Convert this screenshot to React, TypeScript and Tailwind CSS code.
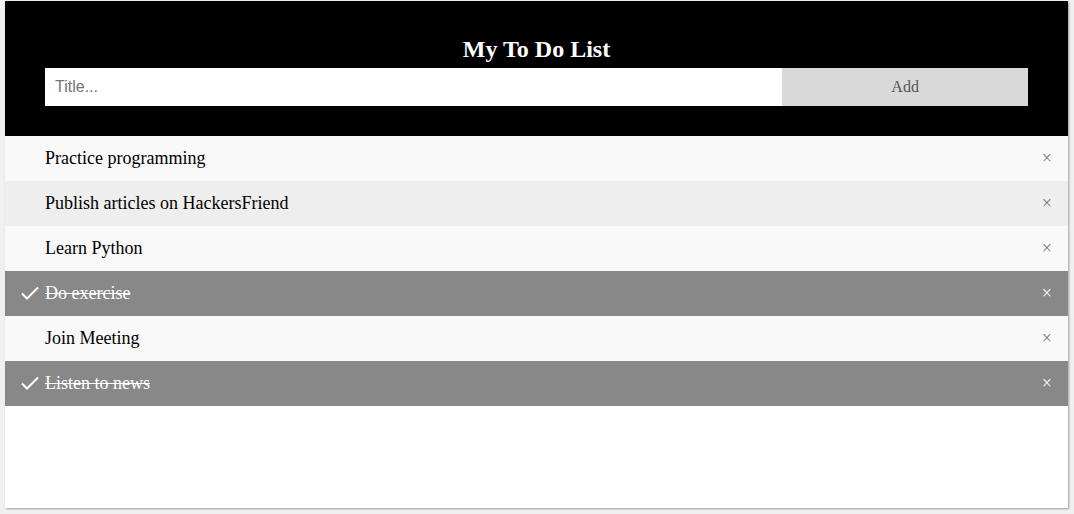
import { useState } from 'react';

interface Todo {
  id: number;
  title: string;
  done: boolean;
}

const initialTodos: Todo[] = [
  { id: 1, title: 'Practice programming', done: false },
  { id: 2, title: 'Publish articles on HackersFriend', done: false },
  { id: 3, title: 'Learn Python', done: false },
  { id: 4, title: 'Do exercise', done: true },
  { id: 5, title: 'Join Meeting', done: false },
  { id: 6, title: 'Listen to news', done: true },
];

export default function App() {
  const [todos, setTodos] = useState<Todo[]>(initialTodos);
  const [title, setTitle] = useState('');

  const addTodo = () => {
    if (!title.trim()) return;
    setTodos([...todos, { id: Date.now(), title: title.trim(), done: false }]);
    setTitle('');
  };

  const toggle = (id: number) => {
    setTodos(todos.map((t) => (t.id === id ? { ...t, done: !t.done } : t)));
  };

  const remove = (id: number) => {
    setTodos(todos.filter((t) => t.id !== id));
  };

  return (
    <div className="min-h-screen bg-[#f0f0f0] pt-px pl-[5px]">
      <div className="w-[1063px] h-[507px] bg-white shadow-[1px_1px_2px_rgba(0,0,0,0.35)]">
        {/* Header */}
        <div className="bg-black px-10 pt-[35px] pb-[30px]">
          <h2 className="mb-[5px] text-center text-[24px] font-bold leading-[27px] text-white font-['Liberation_Serif',serif]">
            My To Do List
          </h2>
          <div className="flex">
            <input
              value={title}
              onChange={(e) => setTitle(e.target.value)}
              placeholder="Title..."
              className="w-3/4 h-[38px] bg-white px-[10px] text-[16px] text-black placeholder:text-[#757575] outline-none font-['Liberation_Sans',sans-serif]"
            />
            <button
              onClick={addTodo}
              className="w-1/4 h-[38px] bg-[#d9d9d9] text-[16px] text-[#555] font-['Liberation_Serif',serif]"
            >
              Add
            </button>
          </div>
        </div>

        {/* List */}
        <ul className="font-['Liberation_Serif',serif]">
          {todos.map((todo, i) => (
            <li
              key={todo.id}
              onClick={() => toggle(todo.id)}
              className={`relative h-[45px] flex items-center pl-10 pr-10 text-[18px] cursor-pointer ${
                todo.done
                  ? 'bg-[#888] text-white line-through'
                  : i % 2 === 0
                  ? 'bg-[#f9f9f9] text-black'
                  : 'bg-[#eee] text-black'
              }`}
            >
              {todo.done && (
                <svg
                  className="absolute left-[14px] top-[13px]"
                  width="22"
                  height="18"
                  viewBox="0 0 22 18"
                  fill="none"
                >
                  <path d="M3 9.5 L8 14.5 L19 3.5" stroke="white" strokeWidth="2" />
                </svg>
              )}
              {todo.title}
              <span
                onClick={(e) => {
                  e.stopPropagation();
                  remove(todo.id);
                }}
                className={`absolute right-0 top-0 h-[45px] flex items-center px-4 text-[18px] no-underline ${
                  todo.done ? 'text-white' : 'text-[#777]'
                }`}
              >
                {'\u00D7'}
              </span>
            </li>
          ))}
        </ul>
      </div>
    </div>
  );
}
